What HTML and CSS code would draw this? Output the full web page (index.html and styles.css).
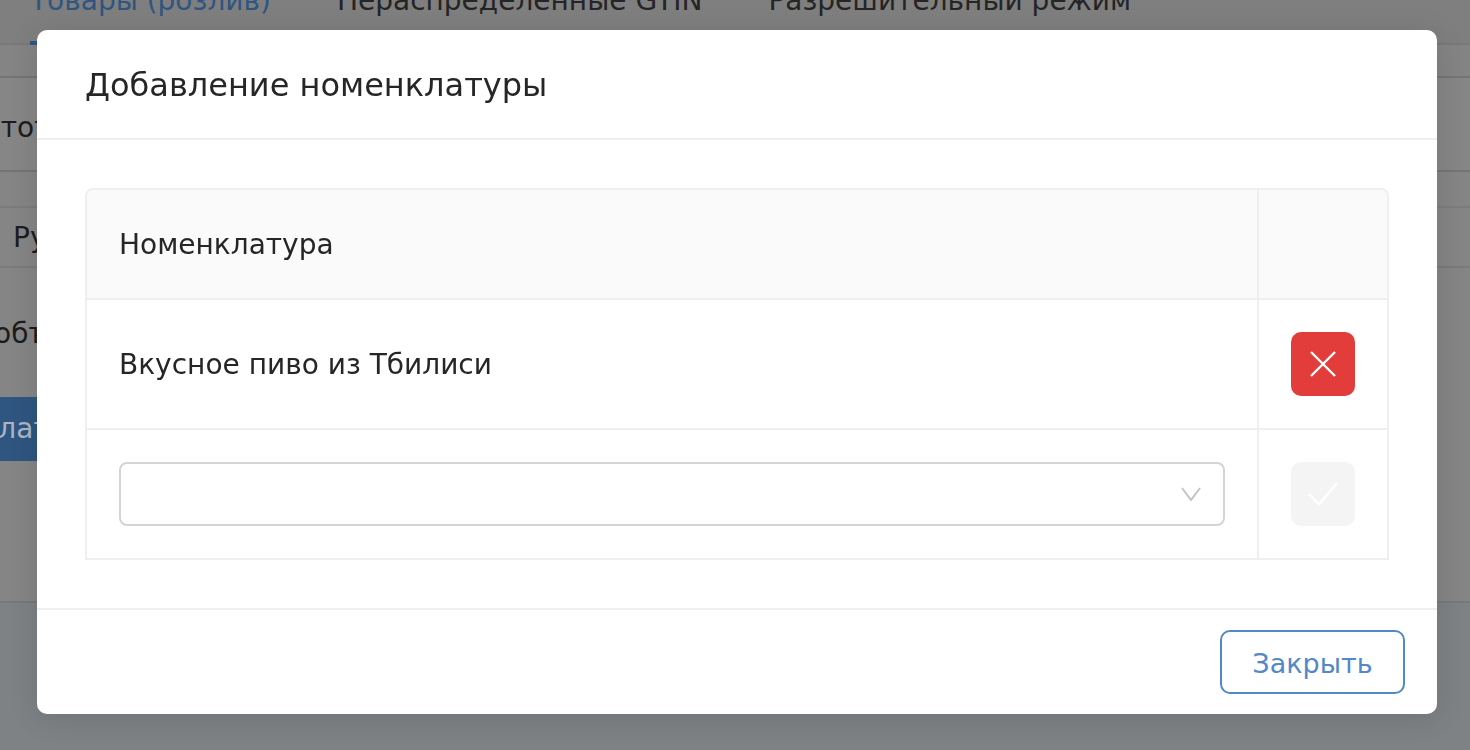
FILE: index.html
```html
<!DOCTYPE html>
<html lang="ru">
  <head>
    <meta charset="UTF-8" />
    <title>Добавление номенклатуры</title>
    <link rel="stylesheet" href="styles.css">
  </head>
  <body>
    <div class="page">
      <div class="tabs">
        <span class="tab tab-active">Товары (розлив)</span>
        <span class="tab">Нераспределенные GTIN</span>
        <span class="tab">Разрешительный режим</span>
      </div>
      <div class="strip"></div>
      <div class="section-title">Частота</div>
      <div class="filter">
        <div class="filter-box">Русское</div>
      </div>
      <div class="volume">объём</div>
      <div class="pay-btn">Оплатить</div>
      <div class="footer-band"></div>
    </div>

    <div class="overlay">
      <div class="modal">
        <div class="modal-header">Добавление номенклатуры</div>
        <div class="modal-body">
          <table class="grid">
            <thead>
              <tr>
                <th>Номенклатура</th>
                <th class="col-action"></th>
              </tr>
            </thead>
            <tbody>
              <tr>
                <td>Вкусное пиво из Тбилиси</td>
                <td class="col-action">
                  <button class="icon-btn icon-btn-danger" type="button">
                    <svg width="28" height="28" viewBox="0 0 28 28">
                      <path d="M2 2 L26 26 M26 2 L2 26" fill="none" stroke="#fff" stroke-width="2.4" />
                    </svg>
                  </button>
                </td>
              </tr>
              <tr>
                <td>
                  <div class="select">
                    <svg width="20" height="14" viewBox="0 0 20 14">
                      <path d="M1 1 L10 13 L19 1" fill="none" stroke="#c4c4c4" stroke-width="2" />
                    </svg>
                  </div>
                </td>
                <td class="col-action">
                  <button class="icon-btn icon-btn-disabled" type="button">
                    <svg width="30" height="24" viewBox="0 0 30 24">
                      <path d="M1 12 L11 22.5 L29 1" fill="none" stroke="#fff" stroke-width="2.4" />
                    </svg>
                  </button>
                </td>
              </tr>
            </tbody>
          </table>
        </div>
        <div class="modal-footer">
          <button class="close-btn" type="button">Закрыть</button>
        </div>
      </div>
    </div>
  </body>
</html>
```

FILE: styles.css
```css
* {
  margin: 0;
  padding: 0;
  box-sizing: border-box;
}

html,
body {
  height: 750px;
  overflow: hidden;
}

body {
  font-family: "DejaVu Sans", "Noto Sans", sans-serif;
  color: #222;
  background: #858585;
}

/* page behind the dialog */
.page {
  height: 750px;
  color: #1c1c1c;
  font-size: 28px;
}

.tabs {
  display: flex;
  gap: 66px;
  height: 45px;
  padding-left: 30px;
  border-bottom: 2px solid #787878;
  line-height: 0;
  white-space: nowrap;
  background: #7f7f7f;
}

.tab {
  height: 43px;
  padding-top: 1px;
  color: #252525;
}

.tab-active {
  height: 45px;
  color: #2f5680;
  border-bottom: 4px solid #2f5680;
}

.strip {
  height: 33px;
  border-bottom: 2px solid #747474;
  background: #848484;
}

.section-title {
  height: 94px;
  padding-top: 33px;
  margin-left: -51px;
  white-space: nowrap;
  border-bottom: 2px solid #747474;
  background: #868686;
}

.filter {
  padding-top: 34px;
}

.filter-box {
  height: 62px;
  padding: 13px 13px;
  border-top: 2px solid #7c7c7c;
  border-bottom: 2px solid #7a7a7a;
}

.volume {
  height: 129px;
  padding-top: 49px;
  margin-left: -6px;
  white-space: nowrap;
}

.pay-btn {
  width: 240px;
  height: 64px;
  margin-left: -42px;
  padding-top: 15px;
  color: #a9b6c4;
  background: #2f5680;
}

.footer-band {
  height: 149px;
  margin-top: 140px;
  border-top: 2px solid #787878;
  background: #7e8285;
}

/* dialog */
.overlay {
  position: fixed;
  top: 0;
  left: 0;
  right: 0;
  bottom: 0;
  padding: 30px 0 0 37px;
}

.modal {
  width: 1400px;
  height: 684px;
  background: #fff;
  border-radius: 10px;
  box-shadow: 0 4px 30px rgba(0, 0, 0, 0.12);
}

.modal-header {
  height: 110px;
  padding: 35px 48px 0;
  font-size: 32px;
  line-height: 40px;
  color: #262626;
  border-bottom: 2px solid #efefef;
}

.modal-body {
  padding: 48px;
  border-bottom: 2px solid #efefef;
}

.grid {
  width: 100%;
  border-collapse: separate;
  border-spacing: 0;
  border: 2px solid #efefef;
  border-bottom: 0;
  border-radius: 8px 8px 0 0;
  table-layout: fixed;
  font-size: 28px;
  color: #262626;
}

.grid th {
  height: 110px;
  padding: 0 32px;
  text-align: left;
  font-weight: 400;
  background: #fafafa;
  border-bottom: 2px solid #efefef;
}

.grid th:first-child {
  border-top-left-radius: 6px;
}

.grid th:last-child {
  border-top-right-radius: 6px;
}

.grid td {
  padding: 32px;
  border-bottom: 2px solid #efefef;
}

.grid .col-action {
  width: 130px;
  padding: 0 32px;
  border-left: 2px solid #efefef;
}

.grid td.col-action {
  padding: 32px;
}

.icon-btn {
  display: flex;
  align-items: center;
  justify-content: center;
  width: 64px;
  height: 64px;
  border: 0;
  border-radius: 10px;
}

.icon-btn-danger {
  background: #e23d3a;
}

.icon-btn-disabled {
  background: #f4f4f4;
}

.select {
  display: flex;
  align-items: center;
  justify-content: flex-end;
  height: 64px;
  padding-right: 22px;
  border: 2px solid #d4d4d4;
  border-radius: 8px;
}

.modal-footer {
  display: flex;
  justify-content: flex-end;
  padding: 20px 32px;
}

.close-btn {
  width: 185px;
  height: 64px;
  padding-top: 2px;
  font-family: inherit;
  font-size: 27px;
  color: #5288c8;
  background: #fff;
  border: 2px solid #5288c8;
  border-radius: 10px;
}
```
